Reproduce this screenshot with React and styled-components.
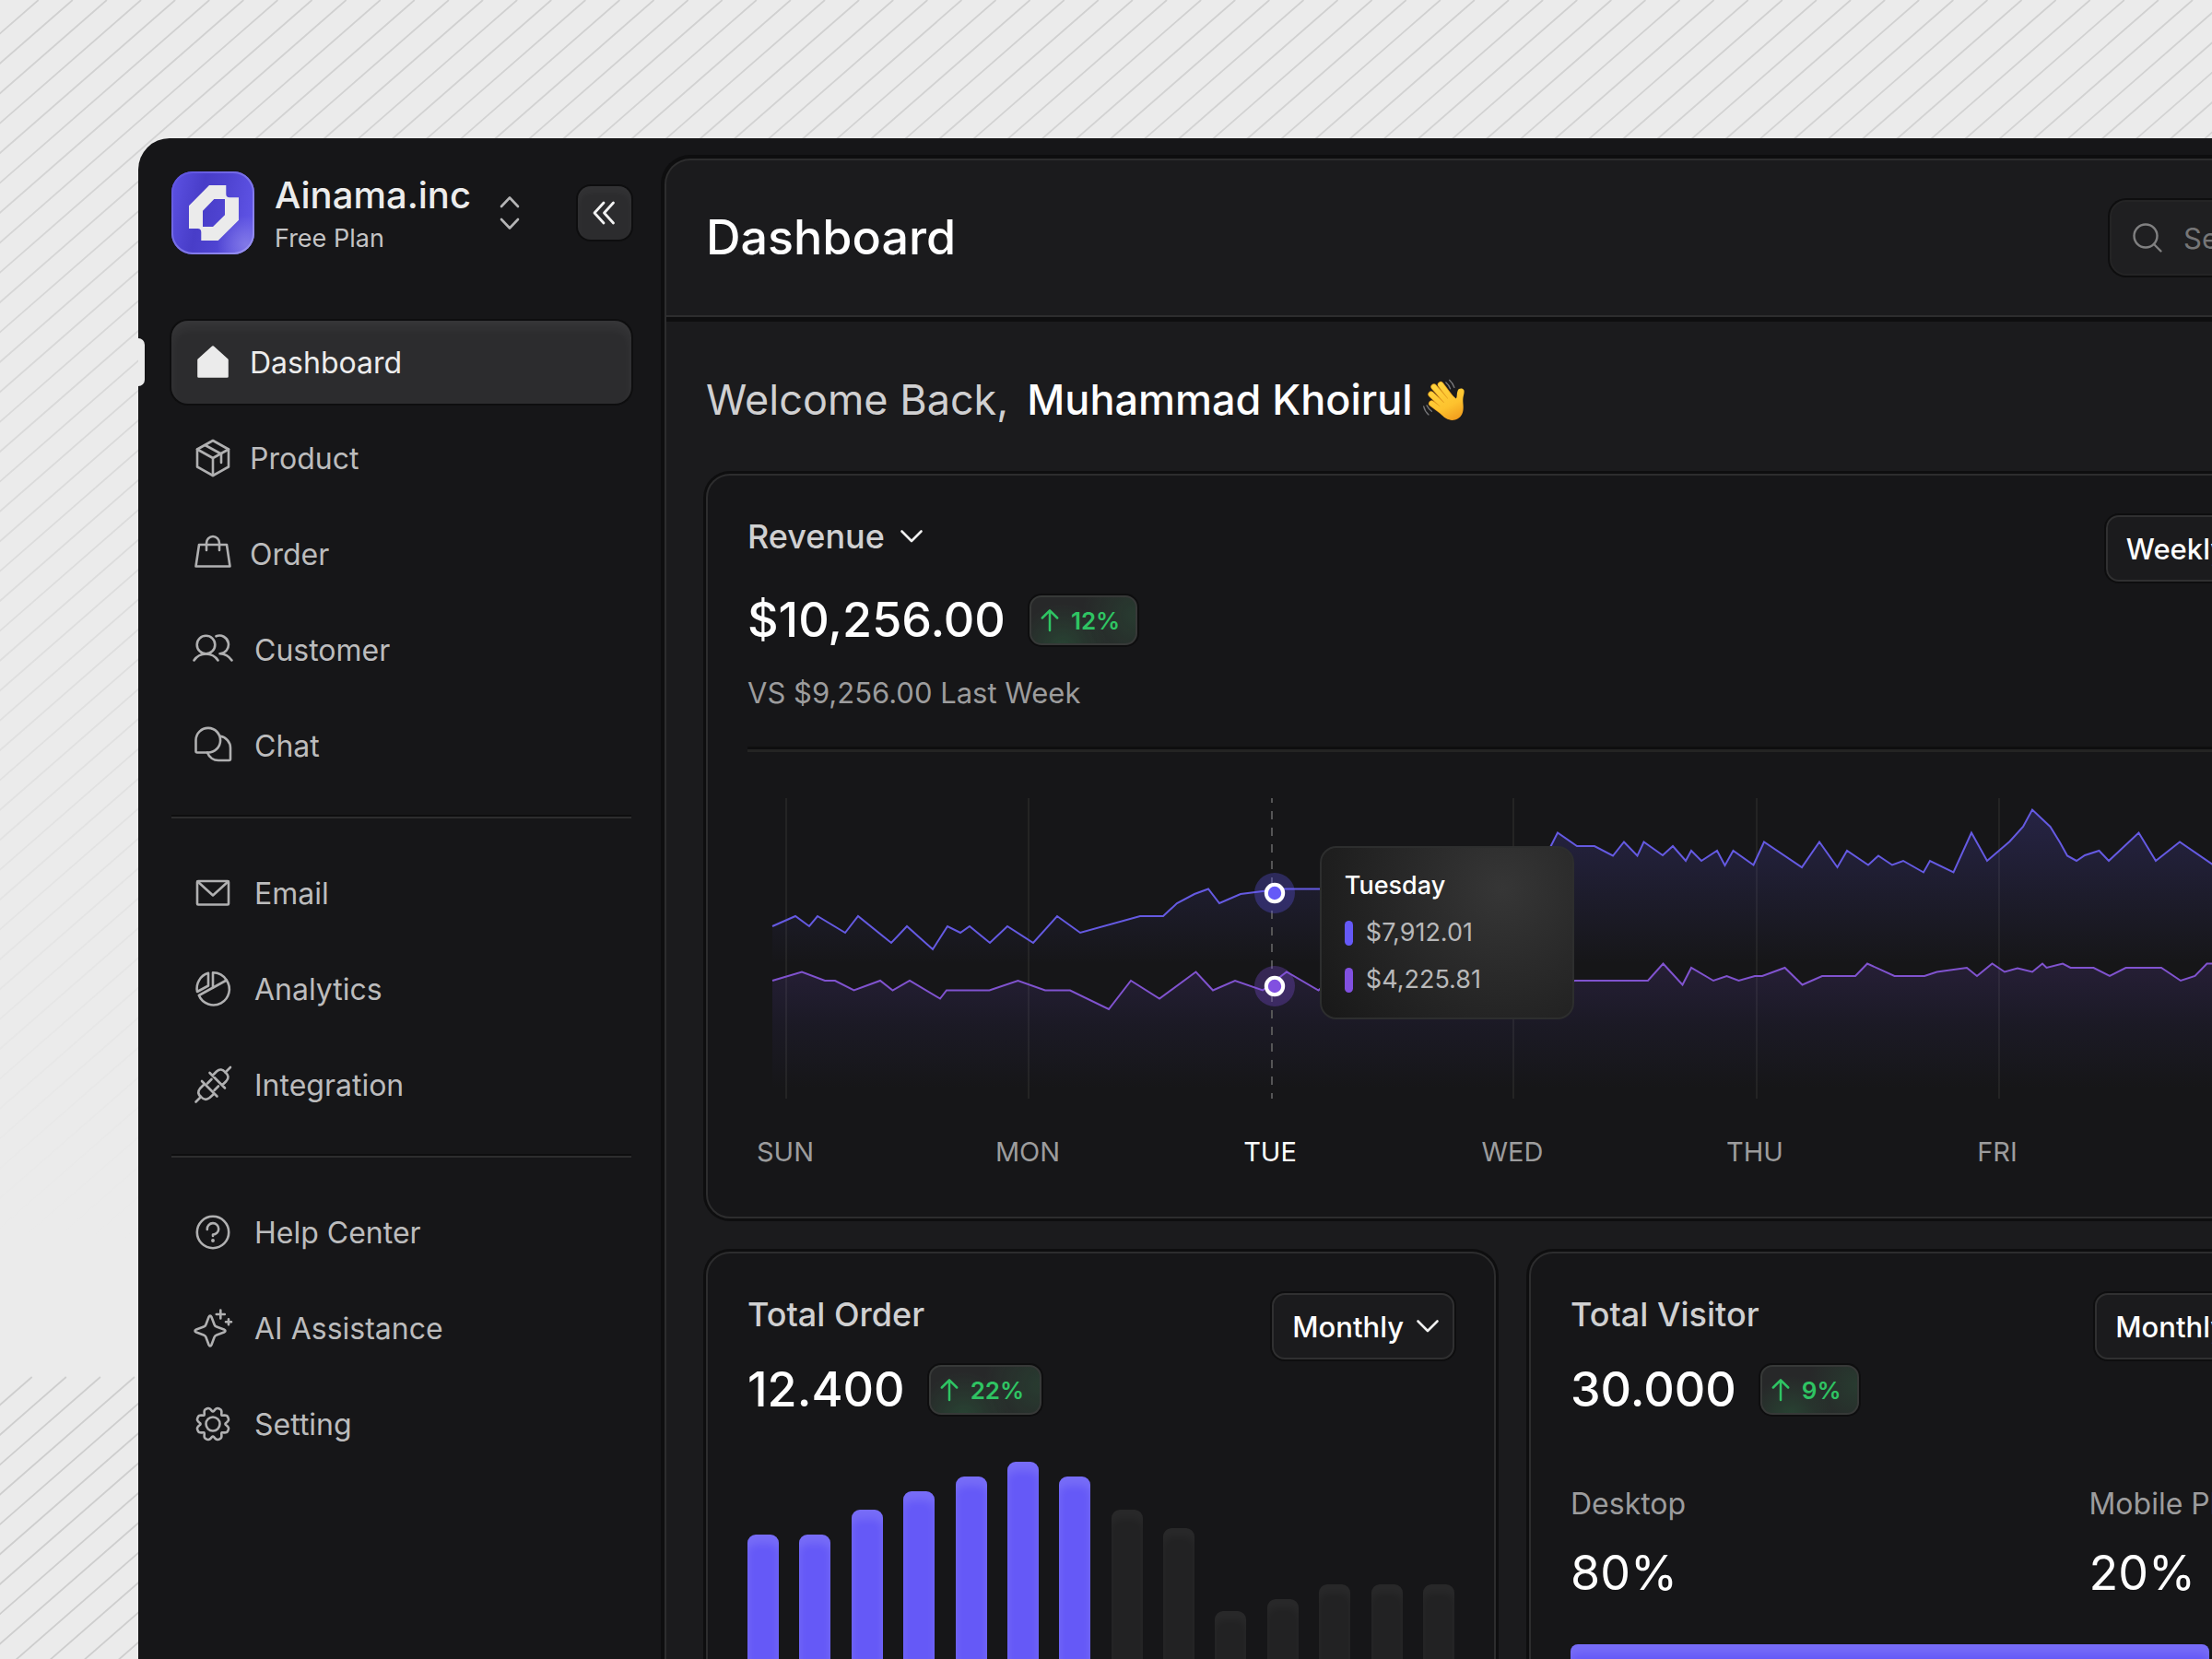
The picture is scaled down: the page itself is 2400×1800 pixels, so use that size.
import React from "react";
import styled, { createGlobalStyle, css } from "styled-components";

const color = {
  page: "#ebebeb",
  shell: "#161618",
  panel: "#1b1b1d",
  raised: "#2c2c2e",
  line: "#2d2d2e",
  ring: "#0e0e0f",
  text: "#ffffff",
  soft: "#d0d0d1",
  nav: "#bcbcbd",
  muted: "#9c9c9d",
  indigo: "#6559f7",
  violet: "#8150e0",
  green: "#2fc463",
};

const GlobalStyle = createGlobalStyle`
  *, *::before, *::after { box-sizing: border-box; }
  body {
    margin: 0;
    background: ${color.page};
    color: ${color.text};
    font-family: Inter, "Liberation Sans", sans-serif;
    -webkit-font-smoothing: antialiased;
  }
  button, input, select { font: inherit; color: inherit; }
  h1, h2, p, ul, dl, dd, dt { margin: 0; padding: 0; font-weight: inherit; }
`;

/* ---------- page frame ---------- */

const Page = styled.div`
  display: grid;
  grid-template: 100vh / 100%;
  overflow: hidden;
`;

const Backdrop = styled.svg`
  grid-area: 1 / 1;
  width: 100%;
  height: 100%;
`;

const Shell = styled.div`
  grid-area: 1 / 1;
  display: flex;
  min-width: 0;
  margin: 150px -185px 0 150px;
  border-top-left-radius: 34px;
  background: ${color.shell};
  overflow: hidden;
`;

/* ---------- sidebar ---------- */

const Sidebar = styled.aside`
  flex: none;
  width: 571px;
  padding: 36px;
`;

const Workspace = styled.div`
  display: flex;
  align-items: center;
  height: 90px;
  margin-bottom: 72px;
`;

const LogoMark = styled.svg`
  flex: none;
  width: 90px;
  height: 90px;
`;

const WorkspaceName = styled.div`
  margin-left: 22px;
`;

const Company = styled.p`
  font-size: 40px;
  line-height: 56px;
  font-weight: 500;
  color: #ececec;
`;

const Plan = styled.p`
  font-size: 27px;
  line-height: 38px;
  color: #c4c4c5;
`;

const IconButton = styled.button`
  display: grid;
  place-items: center;
  padding: 0;
  border: 0;
  background: none;
  cursor: pointer;
`;

const SwitchButton = styled(IconButton)`
  width: 36px;
  height: 48px;
  margin-left: 24px;
  color: #b4b4b5;
`;

const CollapseButton = styled(IconButton)`
  width: 58px;
  height: 58px;
  margin-left: auto;
  border-radius: 14px;
  background: ${color.raised};
  color: #f2f2f2;
  box-shadow: 0 0 0 2px ${color.ring}, inset 0 6px 8px rgba(255, 255, 255, 0.04);
`;

const NavList = styled.ul`
  display: flex;
  flex-direction: column;
  gap: 14px;
  list-style: none;
`;

const NavDivider = styled.hr`
  height: 4px;
  margin: 30px 0 36px;
  border: 0;
  border-top: 2px solid ${color.ring};
  background: ${color.line};
`;

const NavLink = styled.a`
  position: relative;
  display: flex;
  align-items: center;
  gap: ${(p) => (p.$wide ? 23 : 18)}px;
  height: 90px;
  padding: 0 23px;
  border-radius: 18px;
  font-size: 32px;
  color: ${color.nav};
  text-decoration: none;

  ${(p) =>
    p.$active &&
    css`
      color: #ececec;
      background: ${color.raised};
      box-shadow: 0 0 0 2px ${color.ring}, inset 0 8px 12px rgba(255, 255, 255, 0.05);

      &::before {
        content: "";
        position: absolute;
        left: -36px;
        width: 7px;
        height: 52px;
        border-radius: 0 7px 7px 0;
        background: ${color.page};
      }
    `}
`;

const NavIcon = styled.svg`
  flex: none;
  width: 44px;
  height: 44px;
  fill: none;
  stroke: #b0b0b1;
  stroke-width: 2.6;
  stroke-linecap: round;
  stroke-linejoin: round;
`;

/* ---------- main panel ---------- */

const Main = styled.main`
  flex: 1;
  min-width: 0;
  margin: 22px 24px 0 0;
  border: 2px solid ${color.line};
  border-bottom: 0;
  border-radius: 28px 28px 0 0;
  background: ${color.panel};
  box-shadow: 0 0 0 4px ${color.ring};
`;

const Header = styled.header`
  display: flex;
  align-items: center;
  justify-content: space-between;
  height: 170px;
  padding: 0 43px;
  border-bottom: 2px solid ${color.line};
  box-shadow: 0 5px 0 ${color.ring};
`;

const Title = styled.h1`
  font-size: 52px;
  line-height: 64px;
  font-weight: 500;
`;

const SearchBox = styled.label`
  display: flex;
  align-items: center;
  gap: 22px;
  width: 227px;
  height: 82px;
  padding: 0 22px;
  border: 2px solid #242425;
  border-radius: 18px;
  background: #1f1f21;
  box-shadow: 0 0 0 2px ${color.ring};
  color: #808081;

  svg {
    flex: none;
  }
`;

const SearchInput = styled.input`
  width: 100%;
  min-width: 0;
  padding: 0;
  border: 0;
  outline: 0;
  background: none;
  font-size: 31px;

  &::placeholder {
    color: #767677;
  }
`;

const Content = styled.div`
  padding: 63px 43px 44px;
`;

const Welcome = styled.h2`
  display: flex;
  align-items: center;
  gap: 20px;
  margin-bottom: 53px;
  font-size: 45px;
  line-height: 54px;
  color: ${color.soft};
`;

const UserName = styled.span`
  display: flex;
  align-items: center;
  gap: 10px;
  color: ${color.text};
  font-weight: 500;
`;

const Wave = styled.svg`
  width: 47px;
  height: 47px;
`;

/* ---------- cards ---------- */

const Card = styled.section`
  min-width: 0;
  padding: 43px;
  border: 2px solid ${color.line};
  border-radius: 26px;
  background: ${color.shell};
  box-shadow: 0 0 0 3px ${color.ring};
`;

const RevenueCard = styled(Card)`
  margin-bottom: 36px;
  padding-bottom: 52px;
`;

const CardRow = styled.div`
  display: grid;
  grid-template-columns: 1fr 1fr;
  gap: 36px;
`;

const CardHead = styled.div`
  display: flex;
  align-items: flex-start;
  justify-content: space-between;
`;

const CardTitle = styled.h2`
  font-size: 36px;
  line-height: 46px;
  font-weight: 500;
  color: ${color.soft};
`;

const Figure = styled.div`
  display: flex;
  align-items: center;
  gap: 26px;
  margin-top: ${(p) => p.$top}px;
`;

const Amount = styled.p`
  font-size: 52px;
  line-height: 54px;
  font-weight: 500;
`;

const Badge = styled.span`
  display: flex;
  align-items: center;
  gap: 13px;
  height: 54px;
  padding: 0 17px 0 10px;
  border: 2px solid #373938;
  border-radius: 13px;
  background:
    radial-gradient(circle at 30% 110%, rgba(47, 196, 99, 0.18), transparent 50%),
    radial-gradient(circle at 100% 40%, rgba(47, 196, 99, 0.12), transparent 50%),
    #272829;
  box-shadow: 0 0 0 2px ${color.ring};
  color: ${color.green};
  font-size: 26px;
  font-weight: 600;
`;

const Compare = styled.p`
  margin-top: 33px;
  font-size: 31px;
  line-height: 38px;
  color: ${color.muted};
`;

const Rule = styled.hr`
  height: 6px;
  margin: 39px 0 50px;
  border: 0;
  border-top: 3px solid ${color.ring};
  background: #242423;
`;

/* ---------- drop-downs ---------- */

const SelectWrap = styled.span`
  display: grid;
  align-items: center;
  width: fit-content;

  svg {
    grid-area: 1 / 1;
    justify-self: end;
    margin-right: ${(p) => (p.$boxed ? 16 : 0)}px;
    pointer-events: none;
  }
`;

const Select = styled.select`
  grid-area: 1 / 1;
  appearance: none;
  field-sizing: content;
  border: 0;
  outline: 0;
  padding: 0 42px 0 0;
  background: none;
  cursor: pointer;

  ${(p) =>
    p.$boxed &&
    css`
      height: 72px;
      padding: 0 53px 0 20px;
      border: 2px solid #303031;
      border-radius: 14px;
      background: #1b1b1d;
      box-shadow: 0 0 0 2px ${color.ring};
      font-size: 31px;
      font-weight: 500;
    `}
`;

/* ---------- revenue chart ---------- */

const ChartArea = styled.div`
  position: relative;
`;

const ChartSvg = styled.svg`
  display: block;
  width: 100%;
  height: auto;
`;

const Tooltip = styled.div`
  position: absolute;
  left: 37.4%;
  top: 52px;
  display: flex;
  flex-direction: column;
  gap: 17px;
  width: 276px;
  padding: 24px 25px;
  border: 2px solid #2d2e2e;
  border-radius: 18px;
  background: radial-gradient(circle at 72% 24%, #363636 0, #2b2b2b 35%, #181818 100%);
  font-size: 27px;
  line-height: 34px;
`;

const TooltipTitle = styled.p`
  font-weight: 500;
`;

const TooltipRow = styled.p`
  display: flex;
  align-items: center;
  gap: 14px;
  color: #b8b8b9;
`;

const Swatch = styled.span`
  width: 9px;
  height: 27px;
  border-radius: 5px;
  background: ${(p) => p.$color};
`;

const Days = styled.ul`
  display: flex;
  justify-content: space-between;
  margin-top: 40px;
  list-style: none;
`;

const Day = styled.li`
  width: 82px;
  font-size: 29px;
  line-height: 36px;
  text-align: center;
  color: ${(p) => (p.$active ? color.text : color.muted)};
`;

/* ---------- order bars ---------- */

const Bars = styled.div`
  display: flex;
  align-items: flex-end;
  justify-content: space-between;
  height: 300px;
  margin-top: 51px;
`;

const Bar = styled.span`
  width: 34px;
  border-radius: 9px 9px 0 0;
  background: ${(p) => (p.$on ? color.indigo : "#222223")};
  box-shadow: inset 0 10px 10px rgba(255, 255, 255, ${(p) => (p.$on ? 0.12 : 0.03)});
`;

/* ---------- visitors ---------- */

const Split = styled.dl`
  display: grid;
  grid-template-columns: minmax(0, 11fr) minmax(0, 4fr);
  margin-top: 77px;
  white-space: nowrap;
`;

const SplitLabel = styled.dt`
  font-size: 32px;
  line-height: 40px;
  color: ${color.muted};
`;

const SplitValue = styled.dd`
  margin-top: 23px;
  font-size: 52px;
  line-height: 64px;
`;

const ShareBar = styled.div`
  display: grid;
  grid-template-columns: 21fr 2fr;
  gap: 8px;
  height: 102px;
  margin-top: 45px;
`;

const Share = styled.span`
  border-radius: 8px;
  background: ${(p) => (p.$on ? color.indigo : "#222223")};
  box-shadow: inset 0 10px 10px rgba(255, 255, 255, ${(p) => (p.$on ? 0.12 : 0.03)});
`;

/* ---------- drawings ---------- */

const STRIPE = { stepX: 37.1, slope: 32.4 / 37.1, foldY: 1494 };

function stripes(top, height, firstX) {
  const d = [];
  const run = height / STRIPE.slope;
  for (let x = firstX; x < 2600 + run; x += STRIPE.stepX) {
    d.push(`M${x} ${top}L${x - run} ${top + height}`);
  }
  return d.join("");
}

function BackdropLines() {
  return (
    <Backdrop aria-hidden="true">
      <defs>
        <linearGradient id="fade" gradientUnits="userSpaceOnUse" x1="0" y1="0" x2="0" y2={STRIPE.foldY}>
          <stop offset="0" stopColor="#d0d0d0" />
          <stop offset="0.2" stopColor="#d6d6d6" />
          <stop offset="0.9" stopColor={color.page} />
        </linearGradient>
      </defs>
      <path d={stripes(0, STRIPE.foldY, 41.7)} stroke="url(#fade)" strokeWidth="1.8" />
      <path d={stripes(STRIPE.foldY, 400, 34.7)} stroke="#cecece" strokeWidth="1.8" />
    </Backdrop>
  );
}

function Logo() {
  return (
    <LogoMark viewBox="0 0 90 90" role="img" aria-label="Ainama logo">
      <defs>
        <linearGradient id="logoBg" x1="0" y1="0.3" x2="1" y2="0.5">
          <stop offset="0" stopColor="#5a4fe0" />
          <stop offset="0.35" stopColor="#483dc8" />
          <stop offset="0.6" stopColor="#4e43d0" />
          <stop offset="1" stopColor="#5f54e6" />
        </linearGradient>
        <radialGradient id="logoGlow" cx="0.9" cy="0.88" r="0.35">
          <stop offset="0" stopColor="#8a82e8" stopOpacity="0.8" />
          <stop offset="1" stopColor="#8a82e8" stopOpacity="0" />
        </radialGradient>
        <linearGradient id="logoEdge" x1="0" y1="0" x2="1" y2="1">
          <stop offset="0" stopColor="#5b50e0" />
          <stop offset="1" stopColor="#9a93f0" />
        </linearGradient>
      </defs>
      <rect width="90" height="90" rx="23" fill="url(#logoBg)" />
      <rect width="90" height="90" rx="23" fill="url(#logoGlow)" />
      <rect x="1" y="1" width="88" height="88" rx="22" fill="none" stroke="url(#logoEdge)" strokeWidth="2" />
      <path
        fillRule="evenodd"
        fill="#ebebeb"
        d="M41 15H59.3V24.5Q59.3 28.3 63 28.3H73V52.7L50.7 75H32.3V66Q32.3 62 28.5 62H19V37.3ZM46.3 30L34 42.7V60H45L58 47.3V30Z"
      />
    </LogoMark>
  );
}

const gearPath = (() => {
  const pts = [];
  for (let i = 0; i < 160; i += 1) {
    const a = (i / 160) * Math.PI * 2;
    const r = 16.2 - 2.2 * (Math.cos(8 * a) + 0.25 * Math.cos(16 * a));
    pts.push(`${(22 + r * Math.cos(a)).toFixed(2)} ${(22 + r * Math.sin(a)).toFixed(2)}`);
  }
  return `M${pts.join("L")}Z`;
})();

const icons = {
  home: (
    <path fill="#ebebeb" stroke="#ebebeb" d="M22 5.5L37.5 19.5V37.5H6.500V19.500Z" />
  ),
  box: (
    <>
      <path d="M22 3L39 12.500V31.500L22 41L5 31.500V12.500Z" />
      <path d="M5 12.500L22 22L39 12.500M22 22V41" />
      <path d="M13.500 8L31 17.500V27" />
    </>
  ),
  bag: (
    <>
      <path d="M7 12H37L40.500 35.500H3.500Z" />
      <path d="M15 18V10.500A7 7.500 0 0 1 29 10.500V18" />
    </>
  ),
  users: (
    <>
      <circle cx="14.500" cy="16.500" r="9.800" />
      <path d="M1.500 33.500C4.500 29 9 26.500 14.500 26.500S24.500 29 27.500 33.500" />
      <path d="M25.500 7.300A9.800 9.800 0 1 1 29.500 26.200C35 26.200 39.500 29 42.500 33.500" />
    </>
  ),
  chat: (
    <>
      <path d="M16.500 29.500H5Q3.500 29.500 3.500 28V16A13.300 13.300 0 1 1 16.500 29.500Z" />
      <path d="M30 11.800A13 13 0 0 1 41 24.500V36.500Q41 38 39.500 38H28A13 13 0 0 1 16 29.500" />
    </>
  ),
  mail: (
    <>
      <rect x="5" y="9" width="34" height="25.500" rx="1" />
      <path d="M5.500 9.500L22 24.500L38.500 9.500" />
    </>
  ),
  pie: (
    <>
      <path d="M17 4.800A17.300 17.300 0 0 0 5 25L17 18.500Z" />
      <path d="M22 20.500V4.200A17.300 17.300 0 0 1 36.800 12.500" />
      <path d="M6.800 29L36.800 12.500A17.200 17.200 0 1 1 6.800 29Z" />
    </>
  ),
  plugs: (
    <>
      <path d="M41 3L35.500 8.500M3.500 40.500L9 35" />
      <path d="M18.500 9L35 25.500M21.500 12L26 7.500Q31 3 35.500 8.500Q41 13 36.500 18L32 22.500" />
      <path d="M10 18L26.500 34.500M13 21L8 26Q4 31 9 35Q13.500 40 18.500 36L23.500 31.500" />
      <path d="M16 20.500L20.500 16M23.500 28L28 23.500" />
    </>
  ),
  help: (
    <>
      <circle cx="22" cy="22" r="17.200" />
      <path d="M15.800 19V18.500A6.200 6.200 0 1 1 22 24.500V26" />
      <circle cx="22" cy="31" r="1.200" fill="#b0b0b1" strokeWidth="1.500" />
    </>
  ),
  sparkle: (
    <>
      <path d="M17.400 10.200Q19 7 20.600 10.200L23.600 18.200Q24.300 20 26 20.600L34 23.400Q37 25 34 26.600L26 29.400Q24.300 30 23.600 31.800L20.600 39.800Q19 43 17.400 39.800L14.400 31.800Q13.700 30 12 29.400L4 26.600Q1 25 4 23.400L12 20.600Q13.700 20 14.400 18.200Z" />
      <path d="M30.300 2.500V11.500M25.800 7H34.800M39 12.300V18.300M36 15.300H42" />
    </>
  ),
  gear: (
    <>
      <path d={gearPath} />
      <circle cx="22" cy="22" r="7.500" />
    </>
  ),
};

const Chevron = () => (
  <svg width="26" height="16" viewBox="0 0 26 16" fill="none" stroke="#f0f0f0" strokeWidth="2.600" strokeLinecap="round" strokeLinejoin="round" aria-hidden="true">
    <path d="M2.500 2.500L13 13L23.500 2.500" />
  </svg>
);

const ArrowUp = () => (
  <svg width="20" height="26" viewBox="0 0 20 26" fill="none" stroke={color.green} strokeWidth="2.500" strokeLinecap="round" strokeLinejoin="round" aria-hidden="true">
    <path d="M10 24V2.500M1.800 10.500L10 2.300L18.200 10.500" />
  </svg>
);

function WavingHand() {
  return (
    <Wave viewBox="33 22 140 140" role="img" aria-label="waving hand" fill="none" strokeLinecap="round">
      <defs>
        <linearGradient id="skin" gradientUnits="userSpaceOnUse" x1="80" y1="40" x2="140" y2="160">
          <stop offset="0" stopColor="#ffd43e" />
          <stop offset="0.6" stopColor="#fdc22e" />
          <stop offset="1" stopColor="#f09a1c" />
        </linearGradient>
      </defs>
      <g stroke="#e39a1d" strokeWidth="20">
        <path d="M64 102L102 130M62 72L108 116M71 48L118 102M93 41L130 90" />
      </g>
      <g stroke="url(#skin)" strokeWidth="16">
        <path d="M64 102L102 130M62 72L108 116M71 48L118 102M93 41L130 90" />
      </g>
      <path
        fill="url(#skin)"
        d="M84 118L128 74L143 86C147 79 144 70 148 61C151 52 162 52 167 57C172 63 166 76 165 88C164 102 170 118 162 136C154 153 134 159 120 154C106 150 92 138 84 118Z"
      />
      <g stroke="#77777a" strokeWidth="4">
        <path d="M110 34Q120 42 124 54M121 26Q132 36 137 50M38 111Q42 128 54 138M48 108Q54 120 64 127" />
      </g>
    </Wave>
  );
}

/* ---------- data ---------- */

const navGroups = [
  [
    { label: "Dashboard", icon: "home", active: true },
    { label: "Product", icon: "box" },
    { label: "Order", icon: "bag" },
    { label: "Customer", icon: "users", wide: true },
    { label: "Chat", icon: "chat", wide: true },
  ],
  [
    { label: "Email", icon: "mail", wide: true },
    { label: "Analytics", icon: "pie", wide: true },
    { label: "Integration", icon: "plugs", wide: true },
  ],
  [
    { label: "Help Center", icon: "help", wide: true },
    { label: "AI Assistance", icon: "sparkle", wide: true },
    { label: "Setting", icon: "gear", wide: true },
  ],
];

const days = ["SUN", "MON", "TUE", "WED", "THU", "FRI", "SAT"];

const revenueLine =
  "27,139 52,128 67,139 76,128 106,146 120,128 156,157 173,139 201,164 217,139 231,146 241,139 263,157 282,139 310,157 336,128 361,146 426,128 451,128 466,114 485,104 500,98.500 512,114 535,104 571,99.500 583,98.500 640,98.500 700,110 760,90 820,100 860,75 879,37.500 900,52 919,52 939,62.500 951,47.500 965.500,62.500 972.500,47.500 993,62 1004,52 1018,68 1024,57 1035,68 1052,57 1060.500,73 1069.500,57 1091.500,72.500 1103,47.500 1144,75 1163,47.500 1182.500,75 1193,57 1216,72.500 1227,62.500 1242,72.500 1254,68 1276,80.500 1283,68 1308.500,80.500 1328,37.500 1345,68 1369.500,47 1384,31 1394,12.500 1413.500,31 1424,48 1432,62.500 1442,68 1451,62 1466.500,57 1477,68 1509.500,37.500 1528,68 1554,47.500 1589,71.500 1620,50 1660,66";

const orderLine =
  "27,198 59,188.500 84,198 95,198 115.500,208.500 144,198 157.500,208.500 176,198 209,217.500 216,208.500 262.500,208.500 293.500,198 323,208.500 350,208.500 392,229 416,198 447,217.500 486.500,188.500 505,208.500 529,198 559,208.500 585,188.500 619.500,208.500 640,190 700,210 780,190 850,205 898,198 977,198 993.500,179.500 1014.500,202.500 1024,184 1048,198 1062.500,193 1075.500,198 1093,193 1101,193 1125.500,184 1144.500,202.500 1166,193 1202,193 1215,179.500 1244.500,193 1277,193 1290.500,188.500 1323,184 1334,193 1350.500,179.500 1364,188.500 1378,184.500 1394,188.500 1405,179.500 1409.500,184 1427,179.500 1435.500,184 1460.500,184 1478,193 1495.500,184 1534,184 1555,198 1570.500,193 1583.500,179.500 1600,179.500 1630,193 1660,184";

const orderBars = [221, 221, 248, 268, 284, 300, 284, 248, 228, 138, 151, 167, 167, 167];

/* ---------- composed parts ---------- */

function NavItem({ label, icon, active, wide }) {
  return (
    <li>
      <NavLink href={`#${icon}`} $active={active} $wide={wide} aria-current={active ? "page" : undefined}>
        <NavIcon viewBox="0 0 44 44" aria-hidden="true">
          {icons[icon]}
        </NavIcon>
        {label}
      </NavLink>
    </li>
  );
}

function DropDown({ label, options, boxed }) {
  return (
    <SelectWrap $boxed={boxed}>
      <Select $boxed={boxed} aria-label={label} defaultValue={options[0]}>
        {options.map((o) => (
          <option key={o}>{o}</option>
        ))}
      </Select>
      <Chevron />
    </SelectWrap>
  );
}

function Growth({ amount, percent, top }) {
  return (
    <Figure $top={top}>
      <Amount>{amount}</Amount>
      <Badge>
        <ArrowUp />
        {percent}
      </Badge>
    </Figure>
  );
}

function Marker({ y, fill }) {
  return (
    <>
      <circle cx="572" cy={y} r="22" fill={fill} opacity="0.3" />
      <circle cx="572" cy={y} r="9.200" fill={fill} stroke="#fff" strokeWidth="4" />
    </>
  );
}

function RevenueChart() {
  return (
    <ChartArea>
      <ChartSvg viewBox="0 0 1660 326" role="img" aria-label="Revenue by day">
        <defs>
          <linearGradient id="revFill" gradientUnits="userSpaceOnUse" x1="0" y1="12" x2="0" y2="180">
            <stop offset="0" stopColor={color.indigo} stopOpacity="0.2" />
            <stop offset="0.5" stopColor={color.indigo} stopOpacity="0.1" />
            <stop offset="1" stopColor={color.indigo} stopOpacity="0" />
          </linearGradient>
          <linearGradient id="ordFill" gradientUnits="userSpaceOnUse" x1="0" y1="180" x2="0" y2="315">
            <stop offset="0" stopColor={color.violet} stopOpacity="0.15" />
            <stop offset="0.5" stopColor="#6a50e8" stopOpacity="0.06" />
            <stop offset="1" stopColor={color.indigo} stopOpacity="0" />
          </linearGradient>
        </defs>
        <path d="M42 0V326M305 0V326M831 0V326M1095 0V326M1358 0V326M1622 0V326" stroke="#242424" strokeWidth="2" />
        <polygon points={`27,326 ${revenueLine} 1660,326`} fill="url(#revFill)" />
        <polygon points={`27,326 ${orderLine} 1660,326`} fill="url(#ordFill)" />
        <path d="M569 0V326" stroke="#555556" strokeWidth="2" strokeDasharray="9 9" strokeDashoffset="4" />
        <polyline points={revenueLine} fill="none" stroke="#655ae2" strokeWidth="2" />
        <polyline points={orderLine} fill="none" stroke="#8053cf" strokeWidth="2" />
        <Marker y={103} fill={color.indigo} />
        <Marker y={204} fill={color.violet} />
      </ChartSvg>
      <Tooltip>
        <TooltipTitle>Tuesday</TooltipTitle>
        <TooltipRow>
          <Swatch $color={color.indigo} />
          $7,912.01
        </TooltipRow>
        <TooltipRow>
          <Swatch $color={color.violet} />
          $4,225.81
        </TooltipRow>
      </Tooltip>
    </ChartArea>
  );
}

export default function App() {
  return (
    <Page>
      <GlobalStyle />
      <BackdropLines />
      <Shell>
        <Sidebar>
          <Workspace>
            <Logo />
            <WorkspaceName>
              <Company>Ainama.inc</Company>
              <Plan>Free Plan</Plan>
            </WorkspaceName>
            <SwitchButton aria-label="Switch workspace">
              <svg width="24" height="40" viewBox="0 0 24 40" fill="none" stroke="currentColor" strokeWidth="2.600" strokeLinecap="round" strokeLinejoin="round">
                <path d="M3 13L12 3.500L21 13M3 27L12 36.500L21 27" />
              </svg>
            </SwitchButton>
            <CollapseButton aria-label="Collapse sidebar">
              <svg width="28" height="28" viewBox="0 0 28 28" fill="none" stroke="currentColor" strokeWidth="2.800" strokeLinecap="round" strokeLinejoin="round">
                <path d="M13 3L3 14L13 25M23.500 3L13.500 14L23.500 25" />
              </svg>
            </CollapseButton>
          </Workspace>
          <nav aria-label="Main">
            {navGroups.map((group, i) => (
              <React.Fragment key={group[0].label}>
                {i > 0 && <NavDivider />}
                <NavList>
                  {group.map((item) => (
                    <NavItem key={item.label} {...item} />
                  ))}
                </NavList>
              </React.Fragment>
            ))}
          </nav>
        </Sidebar>

        <Main>
          <Header>
            <Title>Dashboard</Title>
            <SearchBox>
              <svg width="34" height="34" viewBox="0 0 34 34" fill="none" stroke="currentColor" strokeWidth="2.400" strokeLinecap="round" aria-hidden="true">
                <circle cx="15" cy="15" r="12.500" />
                <path d="M24 24L31.500 31.500" />
              </svg>
              <SearchInput type="search" placeholder="Search" aria-label="Search" />
            </SearchBox>
          </Header>

          <Content>
            <Welcome>
              <span>Welcome Back,</span>
              <UserName>
                Muhammad Khoirul
                <WavingHand />
              </UserName>
            </Welcome>

            <RevenueCard>
              <CardHead>
                <div>
                  <CardTitle as="div">
                    <DropDown label="Metric" options={["Revenue", "Orders"]} />
                  </CardTitle>
                  <Growth amount="$10,256.00" percent="12%" top={41} />
                  <Compare>VS $9,256.00 Last Week</Compare>
                </div>
                <DropDown boxed label="Revenue period" options={["Weekly", "Monthly"]} />
              </CardHead>
              <Rule />
              <RevenueChart />
              <Days>
                {days.map((d) => (
                  <Day key={d} $active={d === "TUE"}>
                    {d}
                  </Day>
                ))}
              </Days>
            </RevenueCard>

            <CardRow>
              <Card>
                <CardHead>
                  <div>
                    <CardTitle>Total Order</CardTitle>
                    <Growth amount="12.400" percent="22%" top={32} />
                  </div>
                  <DropDown boxed label="Order period" options={["Monthly", "Weekly"]} />
                </CardHead>
                <Bars role="img" aria-label="Orders per period">
                  {orderBars.map((h, i) => (
                    <Bar key={i} $on={i < 7} style={{ height: h }} />
                  ))}
                </Bars>
              </Card>

              <Card>
                <CardHead>
                  <div>
                    <CardTitle>Total Visitor</CardTitle>
                    <Growth amount="30.000" percent="9%" top={32} />
                  </div>
                  <DropDown boxed label="Visitor period" options={["Monthly", "Weekly"]} />
                </CardHead>
                <Split>
                  <div>
                    <SplitLabel>Desktop</SplitLabel>
                    <SplitValue>80%</SplitValue>
                  </div>
                  <div>
                    <SplitLabel>Mobile Phone</SplitLabel>
                    <SplitValue>20%</SplitValue>
                  </div>
                </Split>
                <ShareBar>
                  <Share $on />
                  <Share />
                </ShareBar>
              </Card>
            </CardRow>
          </Content>
        </Main>
      </Shell>
    </Page>
  );
}
